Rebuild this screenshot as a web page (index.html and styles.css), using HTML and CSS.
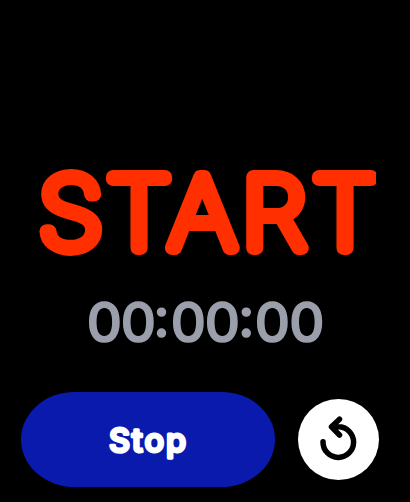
FILE: index.html
```
<!DOCTYPE html>
<html lang="en">
<head>
<meta charset="utf-8">
<title>Timer</title>
<link rel="stylesheet" href="styles.css">
</head>
<body>
<main class="watch">
  <svg class="title" viewBox="34 140 342 140" role="img" aria-label="START">
    <text class="title-text" transform="scale(1.07 1)" y="248.3" x="36.3 99.7 157.6 226 292.4">START</text>
  </svg>
  <svg class="clock" viewBox="80 285 250 75" role="img" aria-label="00:00:00">
    <text class="clock-text" x="86.7 120.7 153.2 170.7 204.7 238 254.7 289.2" y="342 342 337 342 342 337 342 342">00:00:00</text>
  </svg>
  <div class="actions">
    <button class="stop"><svg class="stop-label" viewBox="0 0 100 50"><text class="stop-text" x="49.5" y="36.5" text-anchor="middle" textLength="77">Stop</text></svg></button>
    <button class="reset" aria-label="Reset">
      <svg class="reset-icon" viewBox="0 0 50 55"><path d="M9 29.7A15.3 15.3 0 1 0 24.3 14.8H18M25.5 7.2L17.5 14.8L25.5 23"/></svg>
    </button>
  </div>
</main>
</body>
</html>
```
FILE: styles.css
```
body {
  margin: 0;
  background: #000;
}
.watch {
  display: flex;
  flex-direction: column;
  width: 410px;
  height: 502px;
  box-sizing: border-box;
  padding-top: 140px;
  overflow: hidden;
  font-family: Inter, "Liberation Sans", sans-serif;
}
.title {
  width: 342px;
  height: 140px;
  margin-left: 34px;
  overflow: hidden;
}
.title-text {
  font-size: 98px;
  font-weight: 100;
  fill: #ff2f00;
  stroke: #ff2f00;
  stroke-width: 13.8px;
  stroke-linejoin: round;
}
.clock {
  width: 250px;
  height: 75px;
  margin: 5px 0 0 80px;
}
.clock-text {
  font-size: 54.5px;
  font-weight: 500;
  fill: #9b9fab;
  stroke: #9b9fab;
  stroke-width: 1.6px;
  stroke-linejoin: round;
}
.actions {
  display: flex;
  align-items: center;
  gap: 23px;
  margin: 32px 0 0 21px;
}
button {
  display: flex;
  align-items: center;
  justify-content: center;
  padding: 0;
  border: 0;
}
.stop {
  width: 254px;
  height: 95px;
  border-radius: 54px / 48px;
  background: #0a1aac;
}
.stop-label {
  width: 100px;
  height: 50px;
}
.stop-text {
  font-family: Inter, "Liberation Sans", sans-serif;
  font-size: 32.5px;
  font-weight: 500;
  fill: #fff;
  stroke: #fff;
  stroke-width: 3px;
  stroke-linejoin: round;
}
.reset {
  width: 81px;
  height: 81px;
  border-radius: 50%;
  background: #fff;
}
.reset-icon {
  width: 50px;
  height: 55px;
  fill: none;
  stroke: #000;
  stroke-width: 5.5px;
  stroke-linecap: round;
  stroke-linejoin: round;
}
```
